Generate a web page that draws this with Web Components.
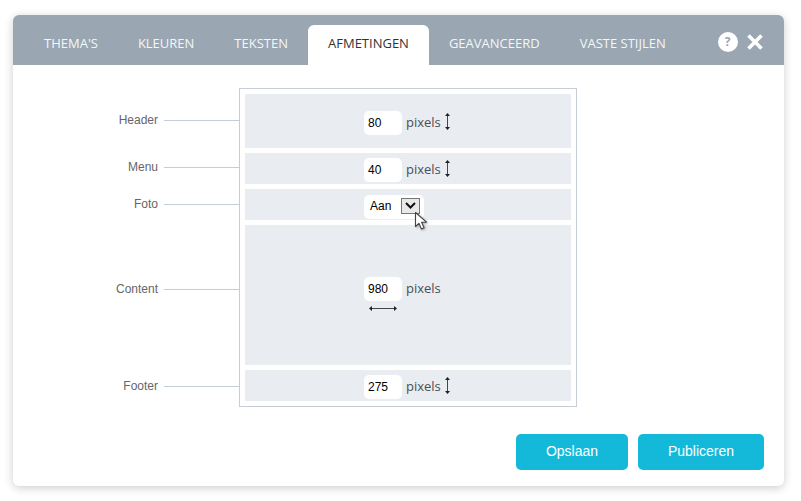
<!DOCTYPE html>
<html lang="nl">
<head>
<meta charset="utf-8">
<title>Afmetingen</title>
<style>
  html,body{ margin:0; background:#fff; }
  body{ padding:15px 17px 15px 13px; }
</style>
</head>
<body>
<style-dialog>
  <dialog-tab slot="tabs">Thema's</dialog-tab>
  <dialog-tab slot="tabs">Kleuren</dialog-tab>
  <dialog-tab slot="tabs">Teksten</dialog-tab>
  <dialog-tab slot="tabs" active>Afmetingen</dialog-tab>
  <dialog-tab slot="tabs">Geavanceerd</dialog-tab>
  <dialog-tab slot="tabs">Vaste stijlen</dialog-tab>

  <size-frame>
    <size-row label="Header" height="54" top="17" line="26"><size-field value="80" arrow="v"></size-field></size-row>
    <size-row label="Menu" height="31" top="5" line="14"><size-field value="40" arrow="v"></size-field></size-row>
    <size-row label="Foto" height="31" top="6" line="15"><select-field value="Aan"></select-field></size-row>
    <size-row label="Content" height="140" top="52" line="64"><size-field value="980" arrow="h"></size-field></size-row>
    <size-row label="Footer" height="31" top="5" line="16"><size-field value="275" arrow="v"></size-field></size-row>
  </size-frame>

  <dialog-button slot="actions" width="112">Opslaan</dialog-button>
  <dialog-button slot="actions" width="126">Publiceren</dialog-button>
</style-dialog>

<script>
const define = (name, html, setup) => {
  const tpl = document.createElement('template')
  tpl.innerHTML = html
  customElements.define(name, class extends HTMLElement{
    constructor(){
      super()
      this.attachShadow({mode:'open'}).appendChild(tpl.content.cloneNode(true))
    }
    connectedCallback(){ if(setup) setup(this, this.shadowRoot) }
  })
}

define('style-dialog', `
  <style>
    :host{
      display:flex; flex-direction:column;
      width:771px; height:471px;
      background:#fff; border-radius:6px;
      box-shadow:0 2px 10px rgba(0,0,0,.2);
      overflow:hidden;
    }
    header{
      display:flex; align-items:flex-end;
      height:50px; padding-left:11px;
      background:#9aa6b2;
    }
    .tools{ display:flex; align-items:center; gap:9px; margin-left:32px; height:20px; align-self:flex-start; margin-top:17px; }
    .help{
      width:20px; height:20px; border-radius:50%;
      background:#fff; color:#9aa6b2;
      font:700 12px/20px "Open Sans",sans-serif; text-align:center;
    }
    .tools svg{ display:block; }
    main{ flex:1; padding:23px 0 0 226px; }
    footer{ display:flex; justify-content:flex-end; gap:10px; padding:0 20px 16px 0; }
  </style>
  <header>
    <slot name="tabs"></slot>
    <div class="tools">
      <div class="help">?</div>
      <svg width="16" height="16" viewBox="0 0 16 16"><path d="M1.5 1.5l13 13M14.5 1.5l-13 13" stroke="#fff" stroke-width="3.6" fill="none"/></svg>
    </div>
  </header>
  <main><slot></slot></main>
  <footer><slot name="actions"></slot></footer>
`)

define('dialog-tab', `
  <style>
    :host{
      display:block; height:40px; padding:0 20px;
      font:400 13px/37px "Open Sans",sans-serif;
      text-transform:uppercase; white-space:nowrap;
      color:#f4f6f8;
    }
    :host([active]){ background:#fff; color:#333; border-radius:6px 6px 0 0; }
  </style>
  <slot></slot>
`)

define('size-frame', `
  <style>
    :host{
      display:flex; flex-direction:column; gap:5px;
      box-sizing:border-box; width:338px; height:319px;
      padding:5px; border:1px solid #c5cdd6;
    }
  </style>
  <slot></slot>
`)

define('size-row', `
  <style>
    :host{ display:flex; margin-left:-145px; }
    .label{
      position:relative; flex:none; width:139px; height:1px;
      font:12px/14px "Liberation Sans",Arial,sans-serif; color:#666;
      display:flex; align-items:center;
    }
    .label span{ width:58px; text-align:right; margin-right:6px; flex:none; margin-top:-2px; }
    .label i{ flex:1; height:1px; background:#c5cdd6; }
    .gap{ width:6px; flex:none; }
    .bar{
      flex:none; width:326px; box-sizing:border-box;
      background:#e9ecf1;
      display:flex; justify-content:flex-start; align-items:flex-start;
      padding-left:119px;
    }
  </style>
  <div class="label"><span></span><i></i></div>
  <div class="gap"></div>
  <div class="bar"><slot></slot></div>
`, (el, root) => {
  root.querySelector('span').textContent = el.getAttribute('label')
  const bar = root.querySelector('.bar')
  bar.style.height = el.getAttribute('height') + 'px'
  bar.style.paddingTop = el.getAttribute('top') + 'px'
  root.querySelector('.label').style.marginTop = el.getAttribute('line') + 'px'
})

define('size-field', `
  <style>
    :host{ display:grid; grid-template-columns:38px auto auto; align-items:start; }
    .input{
      width:38px; height:24px; box-sizing:border-box; padding-left:4px;
      background:#fff; border-radius:5px;
      font:12px/24px "Liberation Sans",Arial,sans-serif; color:#000;
    }
    .unit{ margin-left:4px; font:13px/22px "Open Sans",sans-serif; color:#4a4f57; }
    .v{ margin:2px 0 0 3px; display:block; }
    .h{ grid-column:1; margin:4px 0 0 5px; display:block; }
  </style>
  <div class="input"></div>
  <div class="unit">pixels</div>
`, (el, root) => {
  root.querySelector('.input').textContent = el.getAttribute('value')
  const vert = el.getAttribute('arrow') == 'v'
  const holder = document.createElement('div')
  holder.innerHTML = vert
    ? '<svg class="v" width="7" height="17" viewBox="0 0 7 17"><path d="M3.5 1v15" stroke="#333" stroke-width=".9" fill="none"/><path d="M3.5 0L6 3H1zM3.5 17L1 14H6z" fill="#222"/></svg>'
    : '<svg class="h" width="28" height="7" viewBox="0 0 28 7"><path d="M1 3.5h26" stroke="#333" stroke-width=".9" fill="none"/><path d="M0 3.5L3 1V6zM28 3.5L25 1V6z" fill="#222"/></svg>'
  root.appendChild(holder.firstChild)
})

define('select-field', `
  <style>
    :host{
      display:flex; align-items:center; position:relative;
      width:60px; height:24px; box-sizing:border-box; padding-left:6px;
      background:#fff; border-radius:5px;
      font:12px "Liberation Sans",Arial,sans-serif; color:#000;
    }
    .text{ width:31px; margin-top:-3px; }
    .btn{
      box-sizing:border-box; width:19px; height:16px; margin-top:-3px;
      background:#e9e9e9; border:1px solid #777;
      display:flex; align-items:center; justify-content:center;
    }
    /* mouse cursor over the control */
    .cursor{ position:absolute; left:50px; top:16px; display:block; filter:drop-shadow(1px 1px 1px rgba(0,0,0,.3)); }
  </style>
  <div class="text"></div>
  <div class="btn"><svg width="11" height="7" viewBox="0 0 11 7"><path d="M1 1l4.5 4.5L10 1" stroke="#111" stroke-width="2" fill="none"/></svg></div>
  <svg class="cursor" width="15" height="20" viewBox="0 0 15 20">
    <path d="M1.5 1.5v14l3.4-3.2 2.5 5.7 2.7-1.2-2.5-5.6h4.9z" fill="#fff" stroke="#444" stroke-width="1.1" stroke-linejoin="round"/>
  </svg>
`, (el, root) => {
  root.querySelector('.text').textContent = el.getAttribute('value')
})

define('dialog-button', `
  <style>
    :host{
      display:block; height:36px; box-sizing:border-box;
      background:#14b9d9; color:#fff; border-radius:5px;
      font:14px/34px "Liberation Sans",Arial,sans-serif; text-align:center;
    }
  </style>
  <slot></slot>
`, (el) => { el.style.width = el.getAttribute('width') + 'px' })
</script>
</body>
</html>
